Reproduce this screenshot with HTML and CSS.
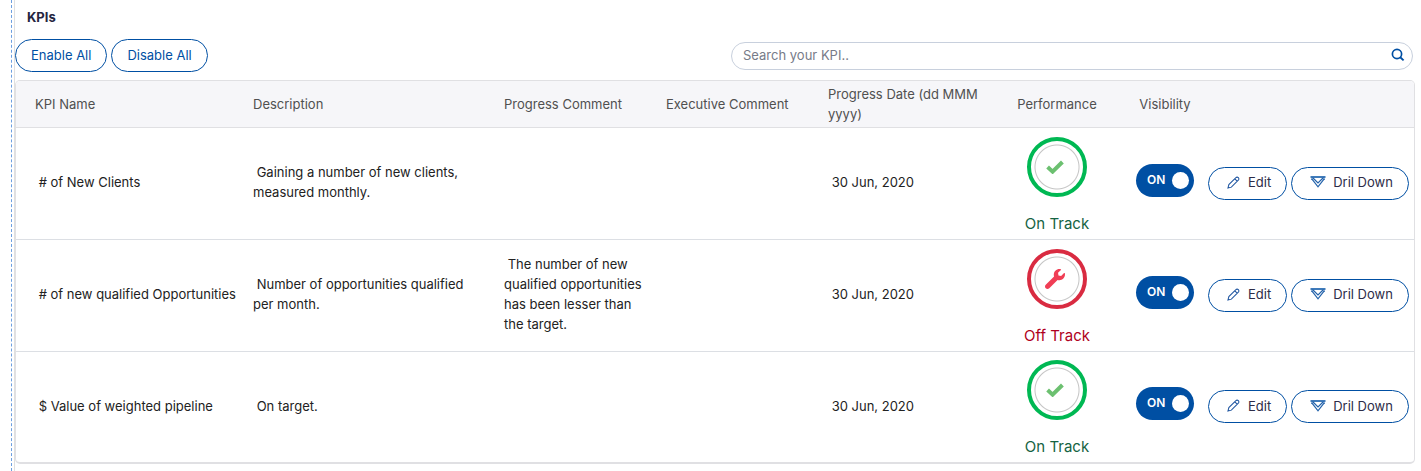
FILE: index.html
```html
<!DOCTYPE html>
<html lang="en">
<head>
    <meta charset="UTF-8">
    <meta name="viewport" content="width=device-width, initial-scale=1.0">
    <title>KPIs</title>
    <link rel="stylesheet" href="styles.css">
</head>
<body>
    <svg class="sprite" aria-hidden="true">
        <symbol id="search" viewBox="0 0 14 14">
            <circle cx="6" cy="6" r="4.6" fill="none" stroke="#004fa3" stroke-width="1.7"/>
            <path d="M9.2 9.2 L12.6 12.4" stroke="#004fa3" stroke-width="1.9"/>
        </symbol>
        <symbol id="check" viewBox="0 0 18 14">
            <path d="M1.6 7 L6.6 11.6 L16.4 2" fill="none" stroke="#6cc070" stroke-width="4"/>
        </symbol>
        <symbol id="wrench" viewBox="0 0 512 512">
            <path fill="#f03e55" d="M507.73 109.1c-2.24-9.03-13.54-12.09-20.12-5.51l-74.36 74.36-67.88-11.31-11.31-67.88 74.36-74.36c6.62-6.62 3.43-17.9-5.66-20.16-47.38-11.74-99.55.91-136.58 37.93-39.64 39.64-50.55 97.1-34.05 147.2L18.74 402.76c-24.99 24.99-24.99 65.51 0 90.5 24.99 24.99 65.51 24.99 90.5 0l213.21-213.21c50.12 16.71 107.47 5.68 147.37-34.22 37.07-37.07 49.7-89.32 37.91-136.73z"/>
        </symbol>
        <symbol id="pencil" viewBox="0 0 14 14">
            <path d="M1 13 L2 9.3 L9.6 1.8 C10.3 1 11.4 1 12.2 1.8 C13 2.6 13 3.7 12.2 4.4 L4.7 12 Z M8.4 3 L11 5.6" fill="none" stroke="#1f55a0" stroke-width="1.1"/>
        </symbol>
        <symbol id="drill" viewBox="0 0 16 12">
            <path d="M0.5 1 H15.5" stroke="#004fa3" stroke-width="1.4"/>
            <path d="M2.5 1.5 L8 7 L13.5 1.5 M1 3.2 H2 L8 10.8 L14 3.2 H15" fill="none" stroke="#2463ab" stroke-width="1.2"/>
        </symbol>
    </svg>

    <main class="panel">
        <h1>KPIs</h1>
        <div class="toolbar">
            <button class="btn" type="button">Enable All</button>
            <button class="btn" type="button">Disable All</button>
            <div class="search">
                <input type="text" placeholder="Search your KPI.." aria-label="Search your KPI">
                <svg><use href="#search"/></svg>
            </div>
        </div>

        <div class="table-box">
            <table>
                <thead>
                    <tr>
                        <th class="name">KPI Name</th>
                        <th class="description">Description</th>
                        <th class="comment">Progress Comment</th>
                        <th class="comment">Executive Comment</th>
                        <th class="date">Progress Date (dd MMM yyyy)</th>
                        <th class="performance">Performance</th>
                        <th class="visibility">Visibility</th>
                        <th class="actions"></th>
                    </tr>
                </thead>
                <tbody>
                    <tr>
                        <td class="name">&nbsp;# of New Clients</td>
                        <td class="description">&nbsp;Gaining a number of new clients, measured monthly.</td>
                        <td class="comment"></td>
                        <td class="comment"></td>
                        <td>&nbsp;30 Jun, 2020</td>
                        <td class="performance on-track">
                            <span class="ring"><svg class="check"><use href="#check"/></svg></span>
                            <span class="status">On Track</span>
                        </td>
                        <td class="visibility">
                            <label class="toggle"><input type="checkbox" aria-label="Show # of New Clients" checked><span>ON</span></label>
                        </td>
                        <td class="actions">
                            <div class="buttons">
                                <button class="btn edit" type="button"><svg><use href="#pencil"/></svg>Edit</button>
                                <button class="btn drill" type="button"><svg><use href="#drill"/></svg>Dril Down</button>
                            </div>
                        </td>
                    </tr>
                    <tr>
                        <td class="name">&nbsp;# of new qualified Opportunities</td>
                        <td class="description">&nbsp;Number of opportunities qualified per month.</td>
                        <td class="comment">&nbsp;The number of new qualified opportunities has been lesser than the target.</td>
                        <td class="comment"></td>
                        <td>&nbsp;30 Jun, 2020</td>
                        <td class="performance off-track">
                            <span class="ring"><svg class="wrench"><use href="#wrench"/></svg></span>
                            <span class="status">Off Track</span>
                        </td>
                        <td class="visibility">
                            <label class="toggle"><input type="checkbox" aria-label="Show # of new qualified Opportunities" checked><span>ON</span></label>
                        </td>
                        <td class="actions">
                            <div class="buttons">
                                <button class="btn edit" type="button"><svg><use href="#pencil"/></svg>Edit</button>
                                <button class="btn drill" type="button"><svg><use href="#drill"/></svg>Dril Down</button>
                            </div>
                        </td>
                    </tr>
                    <tr>
                        <td class="name">&nbsp;$ Value of weighted pipeline</td>
                        <td class="description">&nbsp;On target.</td>
                        <td class="comment"></td>
                        <td class="comment"></td>
                        <td>&nbsp;30 Jun, 2020</td>
                        <td class="performance on-track">
                            <span class="ring"><svg class="check"><use href="#check"/></svg></span>
                            <span class="status">On Track</span>
                        </td>
                        <td class="visibility">
                            <label class="toggle"><input type="checkbox" aria-label="Show $ Value of weighted pipeline" checked><span>ON</span></label>
                        </td>
                        <td class="actions">
                            <div class="buttons">
                                <button class="btn edit" type="button"><svg><use href="#pencil"/></svg>Edit</button>
                                <button class="btn drill" type="button"><svg><use href="#drill"/></svg>Dril Down</button>
                            </div>
                        </td>
                    </tr>
                </tbody>
            </table>
        </div>
    </main>
</body>
</html>
```
FILE: styles.css
```css
* {
    box-sizing: border-box;
}
body {
    margin: 0 6px 0 11px;
    padding-left: 2px;
    border-left: 1px dashed #6d9fe0;
    font-family: Inter, sans-serif;
    font-size: 13px;
    line-height: 20px;
    color: #222;
    background: #fff;
}
.sprite {
    display: none;
}
.panel {
    padding: 7px 0;
    border-left: 1px solid #e0e0e0;
}
h1 {
    margin: 0 0 12px;
    padding-left: 12px;
    font-size: 13px;
    line-height: 20px;
    font-weight: 700;
    color: #25253f;
}
.toolbar {
    display: flex;
    align-items: center;
    gap: 4px;
    padding-right: 2px;
    margin-bottom: 8px;
}
.btn {
    display: inline-flex;
    align-items: center;
    justify-content: center;
    height: 33px;
    padding: 0 15px 2px;
    border: 1px solid #004fa3;
    border-radius: 17px;
    background: #fff;
    color: #004fa3;
    font: inherit;
    white-space: nowrap;
    cursor: pointer;
}
.search {
    position: relative;
    flex: 0 1 682px;
    margin-left: auto;
}
.search input {
    display: block;
    width: 100%;
    height: 28px;
    padding: 0 36px 2px 11px;
    border: 1px solid #c8d0dd;
    border-radius: 14px;
    font: inherit;
    color: #222;
}
.search input::placeholder {
    color: #777b88;
    opacity: 1;
}
.search svg {
    position: absolute;
    top: 6px;
    right: 8px;
    width: 14px;
    height: 14px;
}
.table-box {
    border: 1px solid #e0e0e3;
    border-bottom-width: 2px;
    border-radius: 5px;
    overflow: hidden;
}
table {
    width: 100%;
    table-layout: fixed;
    border-collapse: collapse;
}
th, td {
    padding: 0 5px;
    text-align: left;
    vertical-align: middle;
}
th {
    height: 46px;
    background: #f6f6f9;
    border-bottom: 1px solid #e0e0e3;
    font-weight: 400;
    color: #505050;
}
td {
    height: 112px;
    padding-bottom: 2px;
    border-bottom: 1px solid #dcdfe4;
}
tr:last-child td {
    height: 111px;
    border-bottom: 0;
}
.name {
    width: 232px;
    padding-left: 19px;
    padding-right: 0;
    white-space: nowrap;
}
.description {
    padding-right: 16px;
}
.comment {
    width: 162px;
}
td.comment {
    padding-right: 12px;
}
.date {
    width: 164px;
}
.performance {
    width: 140px;
    text-align: center;
}
td.performance {
    padding-top: 4px;
    padding-bottom: 0;
}
.visibility {
    width: 76px;
    text-align: center;
}
.actions {
    width: 211px;
    padding-bottom: 0;
}
.ring {
    display: flex;
    align-items: center;
    justify-content: center;
    width: 60px;
    height: 60px;
    margin: 0 auto 17px;
    padding-right: 4px;
    border: 4px solid #00b853;
    border-radius: 50%;
    background: radial-gradient(circle, transparent 21px, #c4c4c4 22px, transparent 23px);
}
.off-track .ring {
    border-color: #d92b41;
}
.check {
    width: 18px;
    height: 14px;
}
.wrench {
    width: 20px;
    height: 20px;
}
.status {
    display: block;
    font-size: 15px;
    line-height: 20px;
}
.on-track .status {
    color: #156342;
}
.off-track .status {
    color: #b00020;
}
.toggle {
    display: block;
    position: relative;
    width: 58px;
    height: 33px;
    margin: 0 auto 4px;
    cursor: pointer;
}
.toggle input {
    appearance: none;
    display: block;
    width: 58px;
    height: 33px;
    margin: 0;
    border-radius: 17px;
    background: #004fa3;
}
.toggle input::after {
    content: "";
    position: absolute;
    top: 8px;
    right: 5px;
    width: 17px;
    height: 17px;
    border-radius: 50%;
    background: #fff;
}
.toggle span {
    position: absolute;
    top: 6px;
    left: 11px;
    font-size: 12px;
    font-weight: 600;
    color: #fff;
}
.buttons {
    display: flex;
    gap: 4px;
}
.buttons .btn {
    color: #2c2c48;
}
.buttons .edit {
    gap: 8px;
    padding-left: 18px;
}
.buttons .drill {
    gap: 7px;
    padding-left: 18px;
}
.edit svg {
    width: 13px;
    height: 13px;
}
.drill svg {
    width: 16px;
    height: 12px;
}
```
